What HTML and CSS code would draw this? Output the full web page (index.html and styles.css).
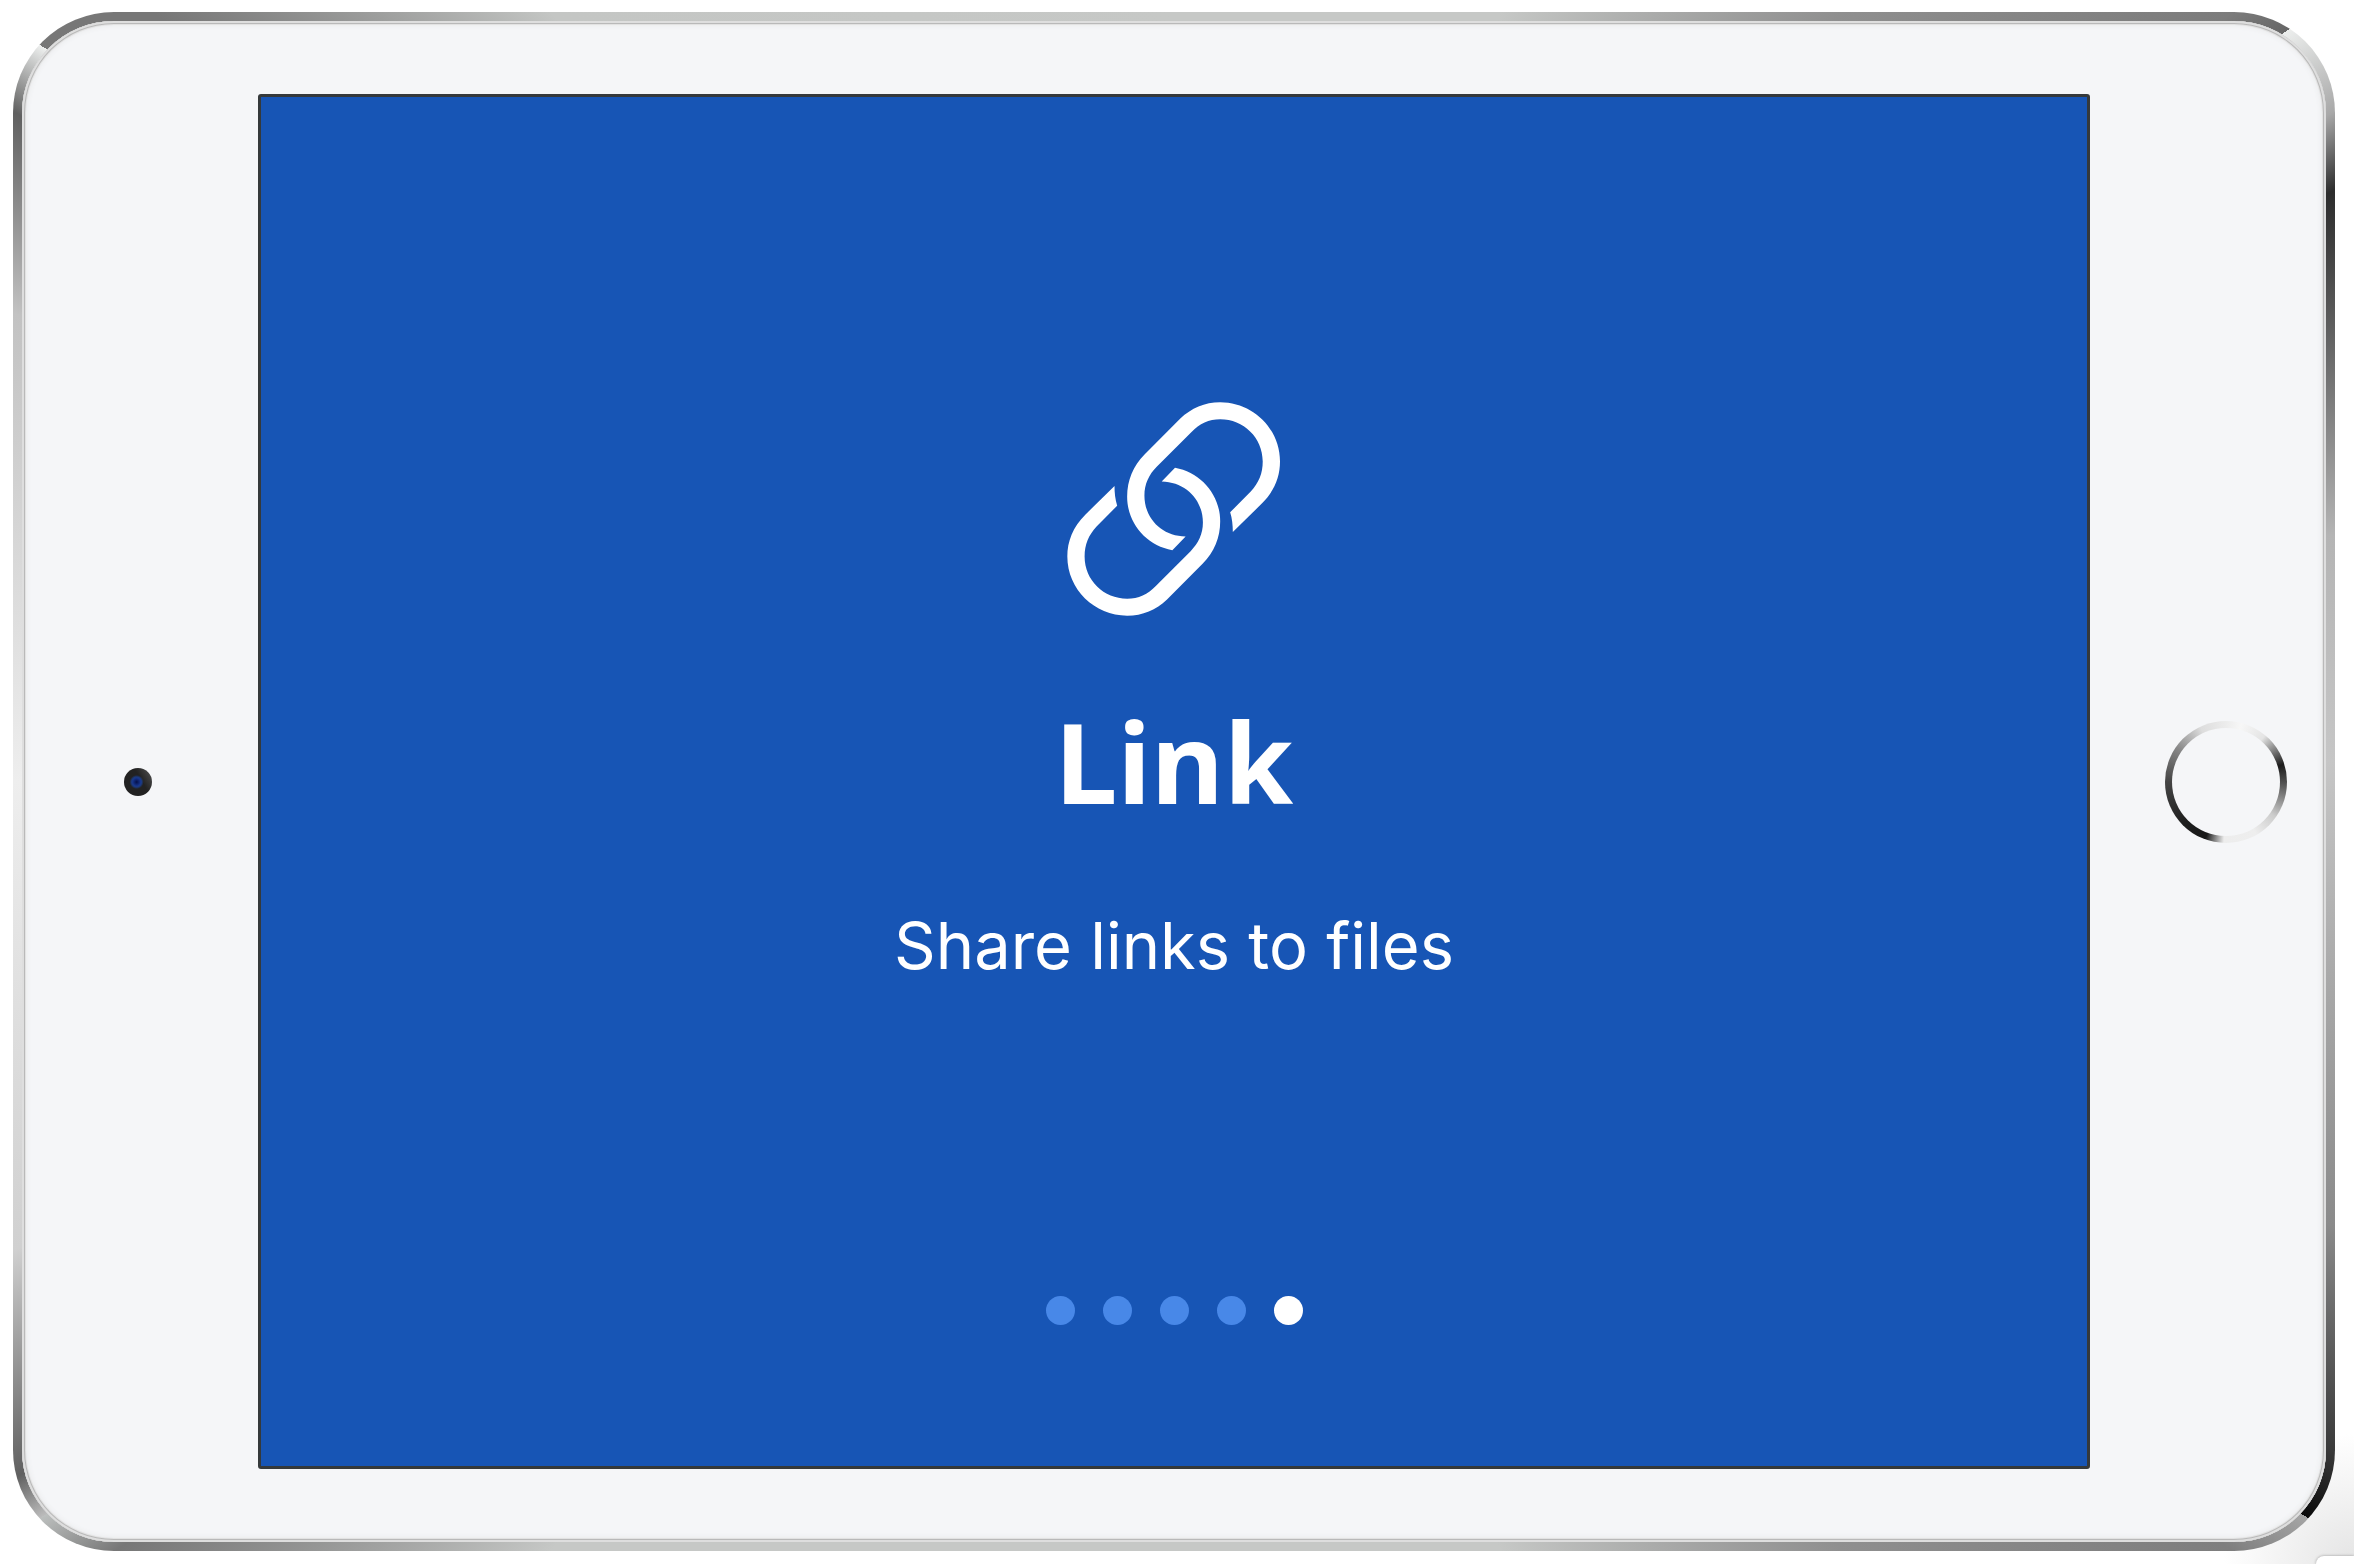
FILE: index.html
```html
<!DOCTYPE html>
<html lang="en">
<head>
    <meta charset="UTF-8">
    <meta name="viewport" content="width=device-width, initial-scale=1.0">
    <title>Link</title>
    <link rel="stylesheet" href="styles.css">
</head>
<body>
    <div class="tablet">
        <div class="tablet-face">
            <div class="bezel bezel-left">
                <span class="camera"></span>
            </div>

            <main class="screen">
                <svg class="link-icon" viewBox="82 65 642 644" aria-hidden="true">
                    <path id="half" d="M580 456L668 370C705 333 722 290 722 244C722 145 640 66 542 66C495 66 455 84 422 115L315 222C280 258 262 300 262 350C262 430 320 497 398 511L438 470C365 468 314 415 314 346C314 312 328 283 351 260L455 156C480 130 508 117 542 117C612 117 670 172 670 244C670 280 658 308 634 334L572 397C578 416 580 436 580 456Z"/>
                    <use href="#half" transform="rotate(180 402 387)"/>
                </svg>
                <h1 class="title">Link</h1>
                <p class="subtitle">Share links to files</p>
                <nav class="dots" aria-label="Slides">
                    <button type="button" class="dot" aria-label="Slide 1"></button>
                    <button type="button" class="dot" aria-label="Slide 2"></button>
                    <button type="button" class="dot" aria-label="Slide 3"></button>
                    <button type="button" class="dot" aria-label="Slide 4"></button>
                    <button type="button" class="dot active" aria-label="Slide 5" aria-current="true"></button>
                </nav>
            </main>

            <div class="bezel bezel-right">
                <button type="button" class="home-button" aria-label="Home"></button>
            </div>
        </div>
    </div>
    <div class="phone-corner"></div>
</body>
</html>
```
FILE: styles.css
```css
* {
    margin: 0;
    padding: 0;
    box-sizing: border-box;
}

body {
    position: relative;
    display: flex;
    min-height: 100vh;
    padding: 12px 19px 13px 13px;
    background: #fff radial-gradient(circle at 100% 100%, #e4e4e4, #fff 130px);
}

/* metal rim */
.tablet {
    flex: 1;
    display: flex;
    padding: 9px;
    border-radius: 101px;
    background: conic-gradient(
        #c6c8c6 0deg, #c6c8c6 23deg, #8f8f8f 41deg, #7c7c7c 54deg, #666 56deg,
        #eceeed 56deg, #a8a8a8 60deg, #2c2c2c 63deg, #b4b4b4 78deg, #c6c6c6 89deg,
        #8a8a8a 111deg, #3a3a3a 120deg, #0a0a0a 123deg,
        #a5a5a5 123deg, #7e7e7e 126deg, #8f8f8f 139deg, #c6c8c6 157deg,
        #c6c8c6 219deg, #777 234deg, #bcbfbe 237deg,
        #bbb 237deg, #606060 239deg, #d0d0d0 248deg, #eee 270deg, #c2c2c2 292deg,
        #606060 300deg, #eef0ef 303deg,
        #777 303deg, #777 307deg, #c4c6c4 321deg, #c6c8c6 360deg
    );
}

.tablet-face {
    flex: 1;
    display: grid;
    grid-template-columns: 236px 1fr 236px;
    padding: 73px 0;
    border-radius: 92px;
    background-color: #f5f6f8;
    box-shadow: inset 0 0 0 2px #dedede, inset 0 0 0 3px #b9b9b9, inset 0 0 0 4px #e2e2e2, inset 0 0 6px 3px #e2e3e4;
}

.bezel {
    display: flex;
    align-items: center;
}

.bezel-left {
    justify-content: center;
    padding-right: 4px;
}

.bezel-right {
    justify-content: flex-end;
    padding-right: 39px;
}

.camera {
    width: 28px;
    height: 28px;
    border-radius: 50%;
    background: radial-gradient(circle at 45% 50%, #04104a 0, #17358c 4px, #1b3a80 5px, transparent 7px),
        linear-gradient(60deg, #222 60%, #555);
}

.home-button {
    width: 122px;
    height: 122px;
    padding: 7px;
    border: none;
    border-radius: 50%;
    background: conic-gradient(
        #ececec 0deg, #f7f7f7 15deg, #e4e4e4 40deg, #1c1c1c 73deg, #555 92deg,
        #ccc 125deg, #eee 150deg, #ededed 182deg, #181818 200deg, #1e1e1e 225deg,
        #444 270deg, #888 305deg, #ddd 335deg, #ececec 360deg
    );
    cursor: pointer;
}

.home-button::before {
    content: "";
    display: block;
    height: 100%;
    border-radius: 50%;
    background-color: #f5f6f8;
}

.screen {
    display: flex;
    flex-direction: column;
    align-items: center;
    padding: 305px 40px 141px;
    border: 3px solid #35393b;
    border-radius: 3px;
    background-color: #1755b5;
    color: #fff;
    text-align: center;
}

.link-icon {
    width: 214px;
    height: 214px;
    fill: currentColor;
}

.title {
    margin-top: 85px;
    font-family: "Noto Sans", "Open Sans", sans-serif;
    font-size: 112px;
    font-weight: 700;
    line-height: 120px;
}

.subtitle {
    margin-top: 85px;
    font-family: Inter, "Open Sans", sans-serif;
    font-size: 65px;
    font-weight: 400;
    line-height: 80px;
}

.dots {
    display: flex;
    gap: 28px;
    margin-top: auto;
}

.dot {
    width: 29px;
    height: 29px;
    border: none;
    border-radius: 50%;
    background-color: #4888e8;
    cursor: pointer;
}

.dot.active {
    background-color: #fff;
}

/* next device, just coming in at the corner */
.phone-corner {
    position: absolute;
    right: 0;
    bottom: 0;
    width: 38px;
    height: 8px;
    border-radius: 8px 0 0 0;
    background-color: #fff;
    box-shadow: 0 0 3px rgba(0, 0, 0, 0.35);
}
```
